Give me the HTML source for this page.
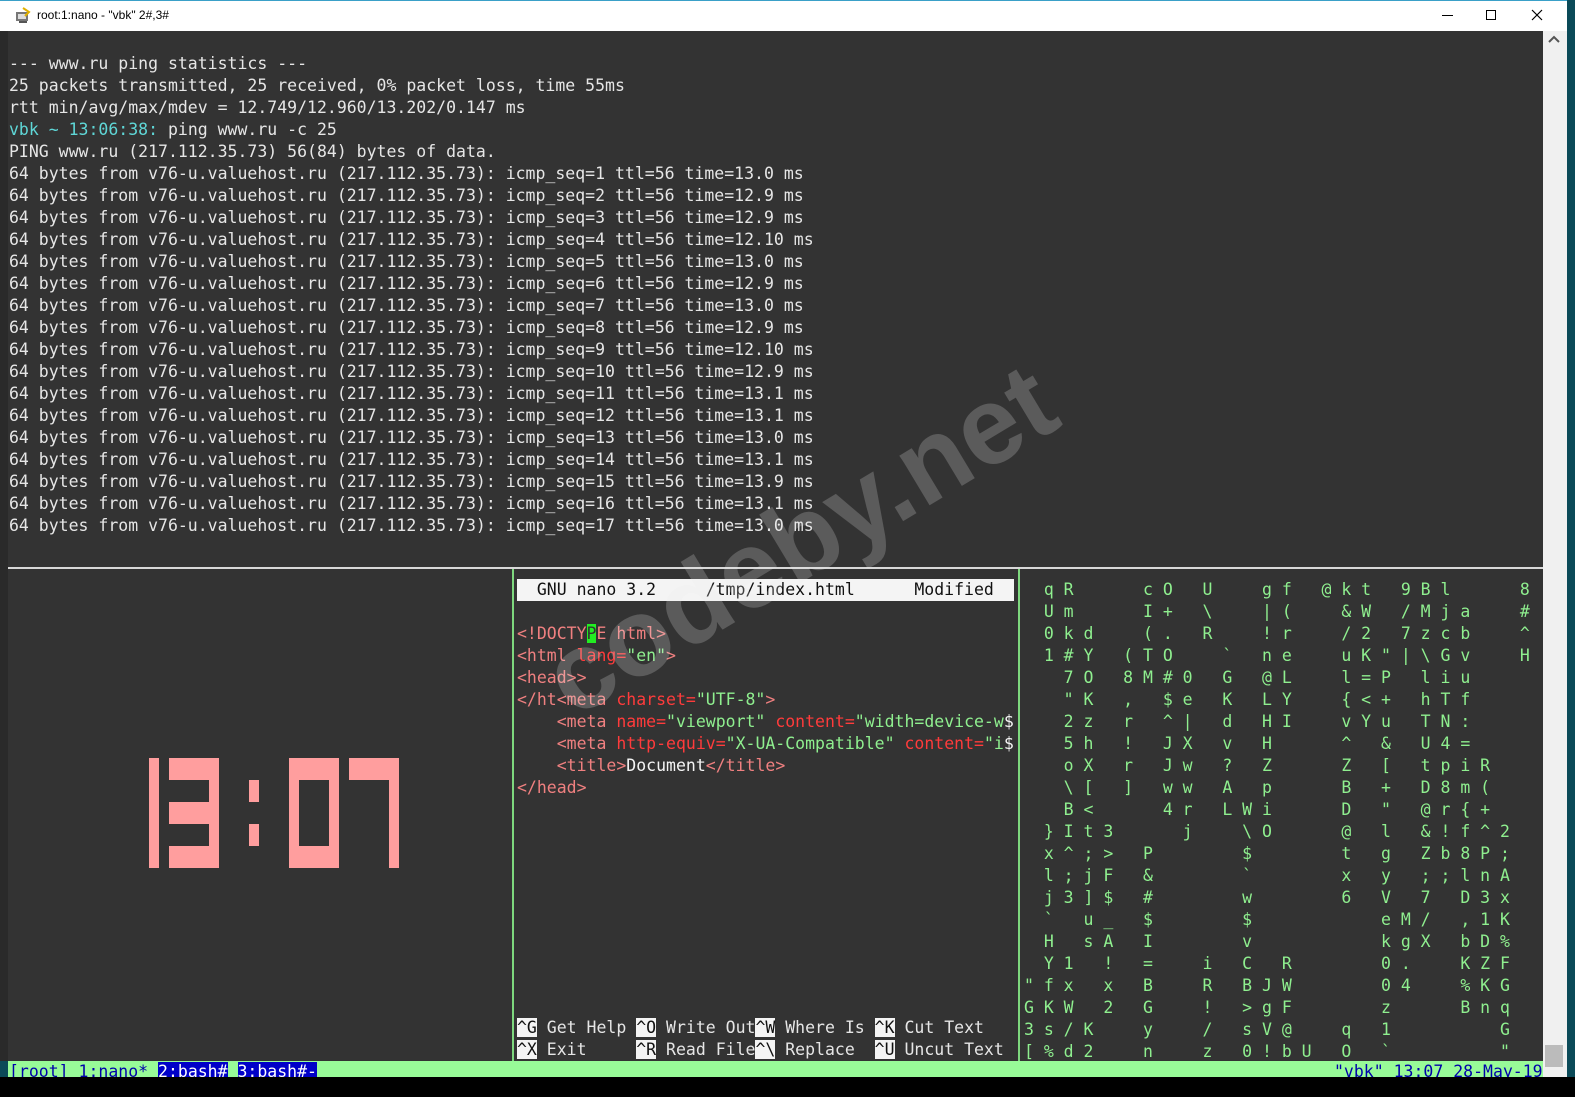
<!DOCTYPE html>
<html><head><meta charset="utf-8">
<style>
*{margin:0;padding:0;box-sizing:border-box}
html,body{width:1575px;height:1097px;overflow:hidden;background:#0b4a58;position:relative}
.abs{position:absolute}
pre,.t{font-family:"DejaVu Sans Mono","Liberation Mono",monospace;font-size:16.5px;line-height:22px;white-space:pre;color:#e6e6e6}
.t{position:absolute}
.cy{color:#5fd7d7}
.tg{color:#f08080}
.at{color:#ff3b3b}
.st{color:#8fef8f}
.wh{color:#f4f4f4}
.inv{background:#f4f4f4;color:#111}
.mx{color:#8fef8f;letter-spacing:9.9px}
.pk{position:absolute;background:#ff9e9e}
</style></head><body>
<div class="abs" style="left:0;top:0;width:1567px;height:31px;background:#fff;border-top:1px solid #3aa0c8"></div>
<svg class="abs" style="left:15px;top:6px" width="18" height="18" viewBox="0 0 18 18"><rect x="1" y="6" width="12" height="9" fill="#777"/><rect x="3" y="8" width="8" height="5" fill="#ddd"/><path d="M8 2 L14 6 L10 10" stroke="#e0b000" stroke-width="2" fill="none"/><rect x="4" y="15" width="8" height="2" fill="#555"/></svg>
<div class="abs" style="left:37px;top:8px;font-family:'Liberation Sans',sans-serif;font-size:12px;color:#000">root:1:nano - "vbk" 2#,3#</div>
<div class="abs" style="left:1442px;top:15px;width:11px;height:1px;background:#000"></div>
<div class="abs" style="left:1486px;top:10px;width:10px;height:10px;border:1px solid #000"></div>
<svg class="abs" style="left:1531px;top:9px" width="12" height="12"><path d="M1 1 L11 11 M11 1 L1 11" stroke="#000" stroke-width="1.2"/></svg>
<div class="abs" style="left:0;top:31px;width:8px;height:1030px;background:#2a2a2a"></div>
<div class="abs" style="left:8px;top:31px;width:1535px;height:1030px;background:#333"></div>
<div class="abs" style="left:1543px;top:31px;width:24px;height:1046px;background:#f0f0f0"></div>
<svg class="abs" style="left:1547px;top:34px" width="14" height="10"><path d="M2 8 L7 3 L12 8" stroke="#555" stroke-width="2" fill="none"/></svg>
<div class="abs" style="left:1545px;top:1045px;width:18px;height:22px;background:#bbb"></div>
<div class="abs" style="left:8px;top:1061px;width:1535px;height:16px;background:#98fb98;overflow:hidden">
<div class="t" style="left:1px;top:0;color:#0000aa">[root] 1:nano* <span style="background:#0000c8;color:#fff">2:bash#</span> <span style="background:#0000c8;color:#fff">3:bash#-</span></div>
<div class="t" style="left:1326px;top:0;color:#0000aa">"vbk" 13:07 28-May-19</div>
</div>
<div class="abs" style="left:0;top:1077px;width:1575px;height:20px;background:#000"></div>

<pre class="abs" style="left:9px;top:31px">

--- www.ru ping statistics ---
25 packets transmitted, 25 received, 0% packet loss, time 55ms
rtt min/avg/max/mdev = 12.749/12.960/13.202/0.147 ms
<span class="cy">vbk ~ 13:06:38:</span> ping www.ru -c 25
PING www.ru (217.112.35.73) 56(84) bytes of data.
64 bytes from v76-u.valuehost.ru (217.112.35.73): icmp_seq=1 ttl=56 time=13.0 ms
64 bytes from v76-u.valuehost.ru (217.112.35.73): icmp_seq=2 ttl=56 time=12.9 ms
64 bytes from v76-u.valuehost.ru (217.112.35.73): icmp_seq=3 ttl=56 time=12.9 ms
64 bytes from v76-u.valuehost.ru (217.112.35.73): icmp_seq=4 ttl=56 time=12.10 ms
64 bytes from v76-u.valuehost.ru (217.112.35.73): icmp_seq=5 ttl=56 time=13.0 ms
64 bytes from v76-u.valuehost.ru (217.112.35.73): icmp_seq=6 ttl=56 time=12.9 ms
64 bytes from v76-u.valuehost.ru (217.112.35.73): icmp_seq=7 ttl=56 time=13.0 ms
64 bytes from v76-u.valuehost.ru (217.112.35.73): icmp_seq=8 ttl=56 time=12.9 ms
64 bytes from v76-u.valuehost.ru (217.112.35.73): icmp_seq=9 ttl=56 time=12.10 ms
64 bytes from v76-u.valuehost.ru (217.112.35.73): icmp_seq=10 ttl=56 time=12.9 ms
64 bytes from v76-u.valuehost.ru (217.112.35.73): icmp_seq=11 ttl=56 time=13.1 ms
64 bytes from v76-u.valuehost.ru (217.112.35.73): icmp_seq=12 ttl=56 time=13.1 ms
64 bytes from v76-u.valuehost.ru (217.112.35.73): icmp_seq=13 ttl=56 time=13.0 ms
64 bytes from v76-u.valuehost.ru (217.112.35.73): icmp_seq=14 ttl=56 time=13.1 ms
64 bytes from v76-u.valuehost.ru (217.112.35.73): icmp_seq=15 ttl=56 time=13.9 ms
64 bytes from v76-u.valuehost.ru (217.112.35.73): icmp_seq=16 ttl=56 time=13.1 ms
64 bytes from v76-u.valuehost.ru (217.112.35.73): icmp_seq=17 ttl=56 time=13.0 ms</pre>

<div class="abs" style="left:8px;top:567px;width:1535px;height:2px;background:#d8d8d8"></div>
<div class="abs" style="left:512px;top:569px;width:2px;height:492px;background:#7ed87e"></div>
<div class="abs" style="left:1018px;top:569px;width:2px;height:492px;background:#7ed87e"></div>

<div class="pk" style="left:149px;top:758px;width:10px;height:110px"></div>
<div class="pk" style="left:169px;top:758px;width:50px;height:22px"></div>
<div class="pk" style="left:209px;top:758px;width:10px;height:110px"></div>
<div class="pk" style="left:169px;top:802px;width:50px;height:22px"></div>
<div class="pk" style="left:169px;top:846px;width:50px;height:22px"></div>
<div class="pk" style="left:249px;top:780px;width:10px;height:22px"></div>
<div class="pk" style="left:249px;top:824px;width:10px;height:22px"></div>
<div class="pk" style="left:289px;top:758px;width:50px;height:110px"></div>
<div class="abs" style="left:299px;top:780px;width:30px;height:66px;background:#333"></div>
<div class="pk" style="left:349px;top:758px;width:50px;height:22px"></div>
<div class="pk" style="left:389px;top:758px;width:10px;height:110px"></div>

<div class="abs" style="left:517px;top:579px;width:497px;height:22px;background:#f4f4f4"></div>
<div class="t" style="left:517px;top:579px;color:#111">  GNU nano 3.2     /tmp/index.html      Modified</div>
<pre class="abs" style="left:517px;top:623px"><span class="tg">&lt;!DOCTY</span><span style="background:#22ee22;color:#333">P</span><span class="tg">E html&gt;</span>
<span class="tg">&lt;html </span><span class="at">lang=</span><span class="st">"en"</span><span class="tg">&gt;</span>
<span class="tg">&lt;head&gt;&gt;</span>
<span class="tg">&lt;/ht&lt;meta </span><span class="at">charset=</span><span class="st">"UTF-8"</span><span class="tg">&gt;</span>
    <span class="tg">&lt;meta </span><span class="at">name=</span><span class="st">"viewport"</span> <span class="at">content=</span><span class="st">"width=device-w</span><span class="wh">$</span>
    <span class="tg">&lt;meta </span><span class="at">http-equiv=</span><span class="st">"X-UA-Compatible"</span> <span class="at">content=</span><span class="st">"i</span><span class="wh">$</span>
    <span class="tg">&lt;title&gt;</span><span class="wh">Document</span><span class="tg">&lt;/title&gt;</span>
<span class="tg">&lt;/head&gt;</span></pre>
<pre class="abs" style="left:517px;top:1017px"><span class="inv">^G</span> Get Help <span class="inv">^O</span> Write Out<span class="inv">^W</span> Where Is <span class="inv">^K</span> Cut Text
<span class="inv">^X</span> Exit     <span class="inv">^R</span> Read File<span class="inv">^\</span> Replace  <span class="inv">^U</span> Uncut Text</pre>

<pre class="abs mx" style="left:1024px;top:579px"> qR   cO U  gf @kt 9Bl   8
 Um   I+ \  |(  &amp;W /Mja  #
 0kd  (. R  !r  /2 7zcb  ^
 1#Y (TO  ` ne  uK"|\Gv  H
  7O 8M#0 G @L  l=P liu
  "K , $e K LY  {&lt;+ hTf
  2z r ^| d HI  vYu TN:
  5h ! JX v H   ^ &amp; U4=
  oX r Jw ? Z   Z [ tpiR
  \[ ] ww A p   B + D8m(
  B&lt;   4r LWi   D " @r{+
 }It3   j  \O   @ l &amp;!f^2
 x^;&gt; P    $    t g Zb8P;
 l;jF &amp;    `    x y ;;lnA
 j3]$ #    w    6 V 7 D3x
 ` u_ $    $      eM/ ,1K
 H sA I    v      kgX bD%
 Y1 ! =  i C R    0.  KZF
"fx x B  R BJW    04  %KG
GKW 2 G  ! &gt;gF    z   Bnq
3s/K  y  / sV@  q 1     G
[%d2  n  z 0!bU O `     "</pre>

<div class="abs" style="left:500px;top:480px;width:600px;height:120px;font-family:'Liberation Sans',sans-serif;font-weight:bold;font-size:110px;line-height:120px;color:rgba(235,235,235,0.22);transform:rotate(-31deg);transform-origin:center;text-align:center;white-space:nowrap">codeby.net</div>
</body></html>
